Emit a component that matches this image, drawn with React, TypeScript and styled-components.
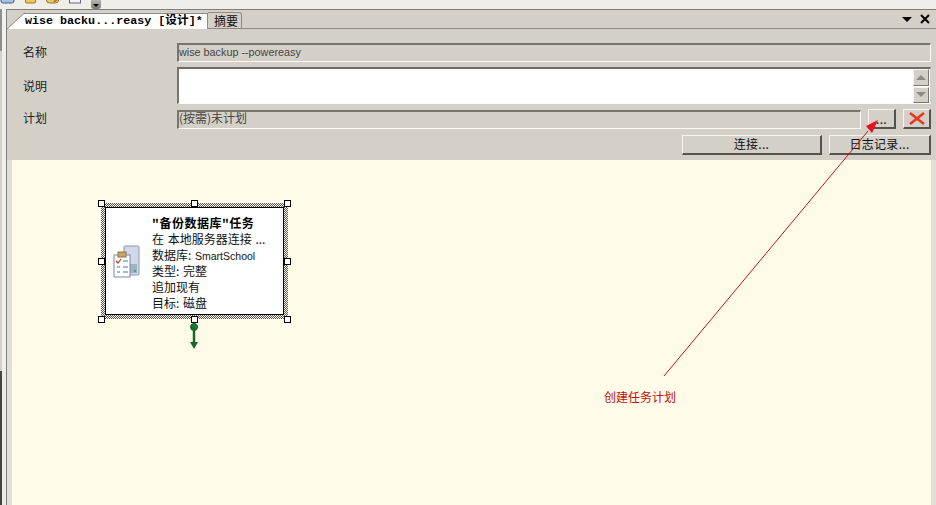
import React from "react";
import styled, { createGlobalStyle } from "styled-components";

const Global = createGlobalStyle`
  html, body { margin: 0; padding: 0; background: #f1f0ec; }
  * { box-sizing: border-box; }
`;

const cjk = `"Noto Sans CJK SC", "Noto Sans", sans-serif`;
const tan = "#d4d0c8";

const Page = styled.div`
  position: relative;
  width: 936px;
  height: 505px;
  overflow: hidden;
  display: flex;
  flex-direction: column;
  background: #f1f0ec;
  font: 12px/16px ${cjk};
  color: #222;
`;

const Toolbar = styled.div`
  height: 9px;
  flex: none;
  display: flex;
  align-items: flex-start;
  gap: 10px;
  overflow: hidden;
  background: #efeee9;
`;

const ToolIcon = styled.svg`
  flex: none;
  display: block;
  margin-top: -11px;
`;

const Overflow = styled.div`
  width: 10px;
  height: 9px;
  background: linear-gradient(#b5b4b0, #7a7975);
  border-radius: 0 0 3px 3px;
  display: flex;
  align-items: center;
  justify-content: center;
`;

const Caret = styled.span`
  width: 0;
  height: 0;
  margin-top: 2px;
  border: 3px solid transparent;
  border-top: 3px solid #000;
  border-bottom: 0;
`;

const Body = styled.div`
  flex: 1;
  min-height: 0;
  display: flex;
`;

const Rail = styled.div`
  width: 6px;
  flex: none;
  display: flex;
  flex-direction: column;
  background: #eeece6;
`;

const RailTop = styled.div`
  height: 42px;
  border-left: 2px solid #8f8e8b;
  background: #f1f0ec;
`;
const RailMid = styled.div`
  height: 320px;
  border-left: 2px solid ${tan};
  background: #efeee9;
`;
const RailLow = styled.div`
  flex: 1;
  border-left: 2px solid #45443f;
  background: #ecebe6;
`;

const Panel = styled.div`
  flex: 1;
  min-width: 0;
  display: flex;
  flex-direction: column;
  background: ${tan};
  border-top: 1px solid #807f7a;
  border-left: 1px solid #7f7f7d;
`;

const TabStrip = styled.div`
  height: 19px;
  flex: none;
  display: flex;
  align-items: flex-end;
  border-bottom: 1px solid #8e8c86;
  position: relative;
`;

const ActiveTab = styled.div`
  width: 200px;
  height: 16px;
  margin-bottom: -1px;
  margin-left: 1px;
  padding-left: 17px;
  position: relative;
  z-index: 1;
  background: #fff;
  clip-path: polygon(0 100%, 16px 0, 100% 0, 100% 100%);
  font: bold 11.7px/15px "Liberation Mono", ${cjk};
  color: #000;
  white-space: nowrap;
  border-top: 1px solid #8e8c86;
  border-right: 1px solid #8e8c86;
`;

const TabSlant = styled.svg`
  position: absolute;
  left: 1px;
  bottom: 0;
  z-index: 2;
`;

const IdleTab = styled.div`
  width: 34px;
  height: 16px;
  padding-left: 6px;
  font: 12px/15px ${cjk};
  color: #111;
  border-top: 1px solid #8e8c86;
  border-right: 1px solid #8e8c86;
  border-radius: 0 3px 0 0;
`;

const StripTools = styled.div`
  margin-left: auto;
  margin-right: 6px;
  margin-bottom: 1px;
  height: 17px;
  display: flex;
  align-items: center;
  gap: 8px;
`;

const Form = styled.div`
  height: 131px;
  flex: none;
  padding: 14px 5px 0 16px;
  display: grid;
  grid-template-columns: 154px 1fr;
  grid-template-rows: 19px 37px 20px 21px;
  row-gap: 5px;
  align-items: center;
`;

const Label = styled.div<{ $lift?: boolean }>`
  font-size: 12px;
  line-height: 16px;
  color: #222;
  padding-bottom: ${(p) => (p.$lift ? 2 : 0)}px;
`;

const Latin = styled.span<{ $size: number }>`
  font-family: "Liberation Sans", sans-serif;
  font-size: ${(p) => p.$size}px;
`;

const ReadField = styled.div`
  height: 19px;
  border-style: solid;
  border-color: #77756f #fbfaf7 #fbfaf7 #77756f;
  border-width: 2px 1px 1px 2px;
  font: 12px/12px ${cjk};
  color: #444;
  white-space: nowrap;
`;

const MemoRow = styled.div`
  height: 37px;
  display: flex;
  background: #fff;
  border-style: solid;
  border-color: #6f6d68 ${tan} #fbfaf7 #77756f;
  border-width: 2px 1px 1px 2px;
`;

const MemoInput = styled.div`
  flex: 1;
`;

const ScrollBar = styled.div`
  width: 16px;
  margin-right: 1px;
  display: flex;
  flex-direction: column;
  gap: 1px;
  background: #fff;
`;

const ScrollButton = styled.div`
  flex: 1;
  background: ${tan};
  border: 1px solid;
  border-color: #f4f3ef #777 #777 #f4f3ef;
  display: flex;
  align-items: center;
  justify-content: center;
`;

const Triangle = styled.span<{ $up?: boolean }>`
  width: 0;
  height: 0;
  border-left: 5px solid transparent;
  border-right: 5px solid transparent;
  ${(p) => (p.$up ? "border-bottom: 5px solid #8a8a86;" : "border-top: 5px solid #8a8a86;")}
`;

const ScheduleRow = styled.div`
  display: flex;
  align-items: center;
  gap: 7px;
`;

const GrowField = styled(ReadField)`
  flex: 1;
`;

const RaisedButton = styled.div<{ $w: number }>`
  width: ${(p) => p.$w}px;
  height: 20px;
  flex: none;
  background: ${tan};
  border-style: solid;
  border-color: #f6f5f1 #53524e #53524e #f6f5f1;
  border-width: 1px 2px 2px 1px;
  display: flex;
  align-items: center;
  justify-content: center;
  font: 12px/16px ${cjk};
  letter-spacing: 0.3px;
  color: #111;
  white-space: nowrap;
`;

const ActionRow = styled.div`
  grid-column: 1 / 3;
  display: flex;
  justify-content: flex-end;
  gap: 7px;
`;

const CanvasRow = styled.div`
  flex: 1;
  min-height: 0;
  display: flex;
  background: #e2dfd6;
`;

const Canvas = styled.div`
  flex: 1;
  margin-left: 5px;
  margin-right: 5px;
  position: relative;
  background: #fefbe8;
`;

/* On the designer canvas the node's place is the content itself */
const Node = styled.div`
  position: absolute;
  left: 89px;
  top: 43px;
  width: 187px;
  height: 116px;
  padding: 4px;
  background-color: #fefbe8;
  background-image: conic-gradient(#555 25%, #f8f5e6 0 50%, #555 0 75%, #f8f5e6 0);
  background-size: 2px 2px;
`;

const NodeBox = styled.div`
  height: 100%;
  display: flex;
  background: #fff;
  border: 1px solid #000;
`;

const NodeIcon = styled.svg`
  flex: none;
  margin: 37px 11px 0 7px;
`;

const NodeText = styled.div`
  padding-top: 7px;
  font: 12px/16px ${cjk};
  color: #111;
  white-space: nowrap;
`;

const NodeTitle = styled.div`
  height: 16px;
  font-weight: 700;
  letter-spacing: 0.5px;
  color: #000;
`;

const NodeLine = styled.div`
  height: 16px;
  word-spacing: 1px;
`;

const Handle = styled.span<{ $x: number; $y: number }>`
  position: absolute;
  left: ${(p) => p.$x}px;
  top: ${(p) => p.$y}px;
  width: 7px;
  height: 7px;
  background: #fff;
  border: 1px solid #000;
`;

const Connector = styled.svg`
  position: absolute;
  left: 176px;
  top: 162px;
`;

const Overlay = styled.svg`
  position: absolute;
  left: 0;
  top: 0;
  pointer-events: none;
`;

const Callout = styled.div`
  position: absolute;
  left: 592px;
  top: 229px;
  font: 12px/16px ${cjk};
  color: #bf1010;
  white-space: nowrap;
`;

const handles: [number, number][] = [
  [86, 40], [179, 40], [272, 40],
  [86, 98], [272, 98],
  [86, 156], [179, 156], [272, 156],
];

export default function App() {
  return (
    <Page>
      <Global />
      <Toolbar>
        <ToolIcon width="15" height="15" viewBox="0 0 15 15">
          <rect x="1" y="1" width="13" height="13" rx="2" fill="#a9bfe4" stroke="#44618f" />
          <rect x="3" y="3" width="9" height="8" fill="#e8eefa" />
        </ToolIcon>
        <ToolIcon width="11" height="15" viewBox="0 0 11 15">
          <rect x="0.5" y="1" width="10" height="13" rx="1" fill="#f2c75a" stroke="#9c7a29" />
        </ToolIcon>
        <ToolIcon width="13" height="15" viewBox="0 0 13 15">
          <rect x="0.5" y="1" width="12" height="13" rx="3" fill="#ecc75e" stroke="#8f7a38" />
          <path d="M8 13 12 9" stroke="#c8702a" strokeWidth="2" />
        </ToolIcon>
        <ToolIcon width="12" height="15" viewBox="0 0 12 15">
          <rect x="0.5" y="1" width="11" height="13" fill="#f4f4f4" stroke="#67677a" />
        </ToolIcon>
        <Overflow><Caret /></Overflow>
      </Toolbar>
      <Body>
        <Rail>
          <RailTop />
          <RailMid />
          <RailLow />
        </Rail>
        <Panel>
          <TabStrip>
            <TabSlant width="18" height="16" viewBox="0 0 18 16">
              <path d="M0.5 15.5 17 0.5" stroke="#8e8c86" fill="none" />
            </TabSlant>
            <ActiveTab>wise backu...reasy [设计]*</ActiveTab>
            <IdleTab>摘要</IdleTab>
            <StripTools>
              <svg width="10" height="8" viewBox="0 0 10 8"><path d="M0 2H10L5 7Z" fill="#000" /></svg>
              <svg width="10" height="10" viewBox="0 0 10 10"><path d="M1 1 9 9M9 1 1 9" stroke="#000" strokeWidth="2" /></svg>
            </StripTools>
          </TabStrip>
          <Form>
            <Label $lift>名称</Label>
            <ReadField><Latin $size={10.8}>wise backup --powereasy</Latin></ReadField>
            <Label>说明</Label>
            <MemoRow>
              <MemoInput />
              <ScrollBar>
                <ScrollButton><Triangle $up /></ScrollButton>
                <ScrollButton><Triangle /></ScrollButton>
              </ScrollBar>
            </MemoRow>
            <Label $lift>计划</Label>
            <ScheduleRow>
              <GrowField>(按需)未计划</GrowField>
              <RaisedButton $w={28}>...</RaisedButton>
              <RaisedButton $w={28}>
                <svg width="16" height="13" viewBox="0 0 16 13"><path d="M1 1 15 12M15 1 1 12" stroke="#e8381f" strokeWidth="2.6" /></svg>
              </RaisedButton>
            </ScheduleRow>
            <ActionRow>
              <RaisedButton $w={140}>连接...</RaisedButton>
              <RaisedButton $w={102}>日志记录...</RaisedButton>
            </ActionRow>
          </Form>
          <CanvasRow>
            <Canvas>
              <Node>
                <NodeBox>
                  <NodeIcon width="28" height="33" viewBox="0 0 28 33">
                    <rect x="11" y="1" width="15" height="29" rx="1" fill="#cfd9e8" stroke="#8a9ab0" />
                    <rect x="13" y="19" width="11" height="9" fill="#9fb1c6" />
                    <circle cx="22" cy="26" r="1" fill="#3f9a55" />
                    <rect x="1" y="10" width="16" height="22" fill="#fff" stroke="#7a8aa8" />
                    <rect x="5" y="7" width="8" height="5" fill="#c9a66b" stroke="#8f7240" />
                    <path d="M3 16 5 18 8 14" stroke="#cc3333" strokeWidth="1.2" fill="none" />
                    <path d="M10 16H15M4 22H7M10 22H15M4 27H7M10 27H15" stroke="#51709c" />
                  </NodeIcon>
                  <NodeText>
                    <NodeTitle>"备份数据库"任务</NodeTitle>
                    <NodeLine>在 本地服务器连接 ...</NodeLine>
                    <NodeLine>数据库: <Latin $size={10.5}>SmartSchool</Latin></NodeLine>
                    <NodeLine>类型: 完整</NodeLine>
                    <NodeLine>追加现有</NodeLine>
                    <NodeLine>目标: 磁盘</NodeLine>
                  </NodeText>
                </NodeBox>
              </Node>
              {handles.map(([x, y]) => (
                <Handle key={`${x}-${y}`} $x={x} $y={y} />
              ))}
              <Connector width="12" height="30" viewBox="0 0 12 30">
                <circle cx="6" cy="5" r="3.5" fill="#1f7a3a" stroke="#0f5a25" />
                <path d="M6 5V23" stroke="#14682c" strokeWidth="2.5" />
                <path d="M2 20H10L6 27Z" fill="#14682c" />
              </Connector>
              <Callout>创建任务计划</Callout>
            </Canvas>
          </CanvasRow>
        </Panel>
      </Body>
      <Overlay width="936" height="505" viewBox="0 0 936 505">
        <path d="M664 376 868 131" stroke="#c8141e" strokeWidth="1" fill="none" />
        <path d="M878 120 866 126 872 133Z" fill="#e8101c" />
      </Overlay>
    </Page>
  );
}
